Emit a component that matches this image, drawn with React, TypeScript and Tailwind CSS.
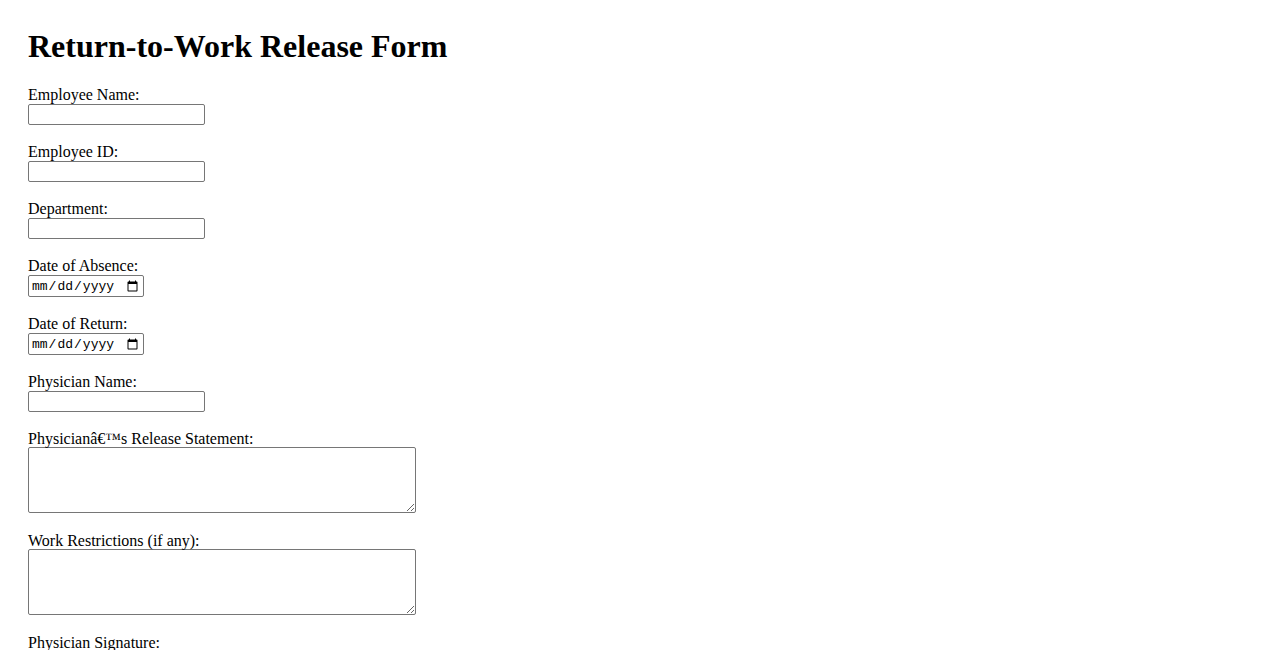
import React from 'react';

const serif = 'font-["Liberation_Serif","Times_New_Roman",serif]';

const TextField = ({ label }: { label: string }) => (
    <div className="mb-[18px]">
        <label className="block leading-[18px]">{label}</label>
        <input
            type="text"
            className="block w-[177px] h-[21px] border border-[#767676] rounded-[2px] bg-white px-[2px] text-[13px]"
        />
    </div>
);

const DateField = ({ label }: { label: string }) => (
    <div className="mb-[18px]">
        <label className="block leading-[18px]">{label}</label>
        <input
            type="date"
            className='block w-[116px] h-[22px] border border-[#767676] rounded-[2px] bg-white pl-[2px] pr-[2px] text-[13px] leading-none font-["Liberation_Mono",monospace]'
        />
    </div>
);

const AreaField = ({ label }: { label: string }) => (
    <div className="mb-[19px]">
        <label className="block leading-[17px]">{label}</label>
        <textarea className="block w-[388px] h-[66px] border border-[#767676] rounded-[2px] bg-white p-[2px] text-[13px]" />
    </div>
);

export default function App() {
    return (
        <div className={`${serif} text-black bg-white min-h-screen px-[28px] pt-[28px] text-[16px]`}>
            <h1 className="text-[32px] font-bold leading-[37px] mb-[21px]">Return-to-Work Release Form</h1>
            <form>
                <TextField label="Employee Name:" />
                <TextField label="Employee ID:" />
                <TextField label="Department:" />
                <DateField label="Date of Absence:" />
                <DateField label="Date of Return:" />
                <TextField label="Physician Name:" />
                <AreaField label="Physicianâ€™s Release Statement:" />
                <AreaField label="Work Restrictions (if any):" />
                <TextField label="Physician Signature:" />
                <DateField label="Date:" />
                <button type="submit" className="border border-[#767676] rounded-[2px] bg-[#efefef] px-[6px] text-[13px]">
                    Submit
                </button>
            </form>
        </div>
    );
}
